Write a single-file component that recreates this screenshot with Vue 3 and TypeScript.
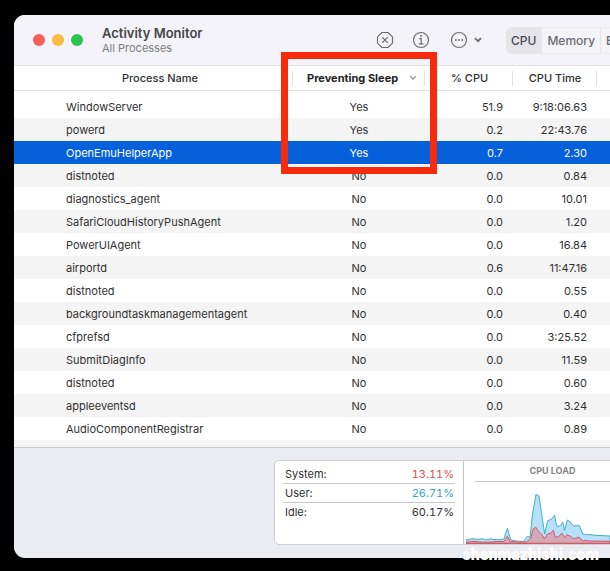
<script setup lang="ts">
import { ref } from 'vue'

interface Process {
  name: string
  sleep: 'Yes' | 'No'
  cpu: string
  time: string
}

const processes: Process[] = [
  { name: 'WindowServer', sleep: 'Yes', cpu: '51.9', time: '9:18:06.63' },
  { name: 'powerd', sleep: 'Yes', cpu: '0.2', time: '22:43.76' },
  { name: 'OpenEmuHelperApp', sleep: 'Yes', cpu: '0.7', time: '2.30' },
  { name: 'distnoted', sleep: 'No', cpu: '0.0', time: '0.84' },
  { name: 'diagnostics_agent', sleep: 'No', cpu: '0.0', time: '10.01' },
  { name: 'SafariCloudHistoryPushAgent', sleep: 'No', cpu: '0.0', time: '1.20' },
  { name: 'PowerUIAgent', sleep: 'No', cpu: '0.0', time: '16.84' },
  { name: 'airportd', sleep: 'No', cpu: '0.6', time: '11:47.16' },
  { name: 'distnoted', sleep: 'No', cpu: '0.0', time: '0.55' },
  { name: 'backgroundtaskmanagementagent', sleep: 'No', cpu: '0.0', time: '0.40' },
  { name: 'cfprefsd', sleep: 'No', cpu: '0.0', time: '3:25.52' },
  { name: 'SubmitDiagInfo', sleep: 'No', cpu: '0.0', time: '11.59' },
  { name: 'distnoted', sleep: 'No', cpu: '0.0', time: '0.60' },
  { name: 'appleeventsd', sleep: 'No', cpu: '0.0', time: '3.24' },
  { name: 'AudioComponentRegistrar', sleep: 'No', cpu: '0.0', time: '0.89' },
]

const tabs = ['CPU', 'Memory', 'Energy']
const activeTab = ref('CPU')
const selected = ref(2)

const stats = [
  { label: 'System:', value: '13.11%', tone: 'system' },
  { label: 'User:', value: '26.71%', tone: 'user' },
  { label: 'Idle:', value: '60.17%', tone: 'idle' },
]
</script>

<template>
  <div class="desktop">
    <main class="window">
      <header class="toolbar">
        <div class="lights">
          <button class="light close" aria-label="Close"></button>
          <button class="light minimise" aria-label="Minimise"></button>
          <button class="light zoom" aria-label="Zoom"></button>
        </div>
        <div class="titles">
          <h1>Activity Monitor</h1>
          <p>All Processes</p>
        </div>
        <div class="actions">
          <button class="icon-button" aria-label="Stop process">
            <svg width="18" height="18" viewBox="0 0 18 18">
              <path d="M5.9 1.5h6.2l4.4 4.4v6.2l-4.4 4.4H5.9l-4.4-4.4V5.9z" />
              <path d="M6.2 6.2l5.6 5.6M11.8 6.2l-5.6 5.6" />
            </svg>
          </button>
          <button class="icon-button" aria-label="Process information">
            <svg width="18" height="18" viewBox="0 0 18 18">
              <circle cx="9" cy="9" r="7.5" />
              <path d="M7.2 7.6h2v5M6.8 12.8h4.6" />
              <circle class="dot" cx="9" cy="5" r="1" />
            </svg>
          </button>
          <button class="icon-button more" aria-label="More options">
            <svg width="18" height="18" viewBox="0 0 18 18">
              <circle cx="9" cy="9" r="7.5" />
              <circle class="dot" cx="5.8" cy="9" r="1" />
              <circle class="dot" cx="9" cy="9" r="1" />
              <circle class="dot" cx="12.2" cy="9" r="1" />
            </svg>
            <svg class="bold" width="8" height="6" viewBox="0 0 8 6">
              <path d="M1 1.2l3 3 3-3" />
            </svg>
          </button>
        </div>
        <nav class="tabs" aria-label="Resource">
          <button
            v-for="tab in tabs"
            :key="tab"
            class="tab"
            :class="{ active: tab === activeTab }"
            @click="activeTab = tab"
          >{{ tab }}</button>
        </nav>
      </header>

      <div class="table-area">
        <table>
          <colgroup>
            <col class="col-name" />
            <col class="col-sleep" />
            <col class="col-cpu" />
            <col class="col-time" />
            <col class="col-rest" />
          </colgroup>
          <thead>
            <tr>
              <th scope="col" class="name-head">Process Name</th>
              <th scope="col" class="sleep-head" aria-sort="descending">
                <button class="sort">
                  <span>Preventing Sleep</span>
                  <svg width="8" height="6" viewBox="0 0 8 6">
                    <path d="M1 1.2l3 3 3-3" />
                  </svg>
                </button>
              </th>
              <th scope="col" class="cpu-head">% CPU</th>
              <th scope="col">CPU Time</th>
              <td></td>
            </tr>
          </thead>
          <tbody>
            <tr
              v-for="(process, index) in processes"
              :key="index"
              :class="{ selected: index === selected }"
              @click="selected = index"
            >
              <td class="name">{{ process.name }}</td>
              <td class="sleep">{{ process.sleep }}</td>
              <td class="number">{{ process.cpu }}</td>
              <td class="number">{{ process.time }}</td>
              <td></td>
            </tr>
          </tbody>
        </table>
        <div class="highlight" aria-hidden="true"></div>
      </div>

      <footer class="summary">
        <div class="panel">
          <dl class="stats">
            <div v-for="stat in stats" :key="stat.label" class="stat">
              <dt>{{ stat.label }}</dt>
              <dd :class="stat.tone">{{ stat.value }}</dd>
            </div>
          </dl>
          <section class="load">
            <h2>CPU LOAD</h2>
            <svg class="chart" width="144" height="54" viewBox="0 0 432 162" role="img" aria-label="CPU load history">
              <path
                class="user-area"
                d="M0 148L4 150L18 146L36 148L48 146L60 150L72 147L90 149L108 149L114 146L124 115L134 148L144 152L158 154L174 154L184 139L192 142L200 70L210 13L219 18L228 80L236 132L245 92L256 88L262 81L266 76L270 100L274 110L284 107L290 96L296 121L304 90L312 95L322 108L340 107L350 132L358 134L372 134L390 136L432 138V162H0Z"
              />
              <path
                class="system-area"
                d="M0 157L18 154L60 157L90 155L114 154L124 139L132 154L160 156L182 156L194 145L201 118L209 111L216 122L227 133L235 147L244 132L254 130L262 120L268 142L278 139L288 130L296 143L303 134L314 139L322 146L340 142L350 153L358 151L368 153L432 154V162H0Z"
              />
              <path class="base" d="M0 160H432" />
            </svg>
          </section>
        </div>
      </footer>
    </main>
    <div class="watermark">shenmazhishi.com</div>
  </div>
</template>

<style>
body {
  margin: 0;
  background: #000;
}
</style>

<style scoped>
.desktop {
  position: relative;
  box-sizing: border-box;
  min-height: 100vh;
  padding: 15px 0 12px 14px;
  overflow: hidden;
  background: #000;
  color: #303030;
  font-family: Inter, "Liberation Sans", sans-serif;
  font-size: 11px;
}

button {
  padding: 0;
  border: 0;
  background: none;
  color: inherit;
  font: inherit;
}

.window {
  overflow: hidden;
  border-radius: 11px 0 0 11px;
  background: #ebecf1;
}

.toolbar {
  display: flex;
  align-items: center;
  box-sizing: border-box;
  height: 51px;
  padding-left: 19px;
  border-bottom: 1px solid #e2e2e5;
  background: #f3f3f9;
}

.lights {
  display: flex;
  gap: 7px;
  flex: none;
  width: 69px;
}

.light {
  width: 12px;
  height: 12px;
  border-radius: 50%;
}

.close { background: #f65f58; }
.minimise { background: #f9bc40; }
.zoom { background: #2bc44a; }

.titles {
  flex: none;
  width: 274px;
  white-space: nowrap;
}

h1,
h2,
p,
dl,
dd {
  margin: 0;
}

h1 {
  color: #46464a;
  font-size: 13px;
  font-weight: 600;
  line-height: 15px;
}

.titles p {
  color: #7c7c82;
  line-height: 14px;
}

.actions {
  display: flex;
  flex: none;
  gap: 18px;
  width: 130px;
  color: #6b6b70;
}

.icon-button {
  display: flex;
  align-items: center;
  gap: 6px;
}

.icon-button + .more {
  margin-left: 2px;
}

svg {
  display: block;
  flex: none;
  fill: none;
  stroke: currentColor;
  stroke-width: 1.2;
}

.bold {
  stroke-width: 1.8;
}

.dot {
  fill: currentColor;
  stroke: none;
}

.tabs {
  display: flex;
  flex: none;
  height: 27px;
  border-radius: 6px;
  background: #f4f4f8;
  box-shadow: inset 0 0 0 1px #ebebf0;
}

.tab {
  padding: 0 5px;
  border-right: 1px solid #e6e6eb;
  color: #6b6b70;
  font-size: 12px;
  font-weight: 500;
}

.tab.active {
  border-radius: 6px 0 0 6px;
  background: #e4e4e9;
  color: #4b4b50;
}

.table-area {
  position: relative;
  padding-bottom: 7px;
  border-bottom: 1px solid #c9c9cc;
  background: #f4f4f5;
}

table {
  width: 100%;
  table-layout: fixed;
  border-spacing: 0;
  background: #fff;
}

.col-name { width: 279px; }
.col-sleep { width: 132px; }
.col-cpu { width: 88px; }
.col-time { width: 84px; }

th,
td {
  overflow: hidden;
  padding: 0;
  white-space: nowrap;
}

thead tr {
  height: 25px;
}

thead th,
thead td {
  border-bottom: 1px solid #e2e2e2;
  font-weight: 500;
}

thead th {
  background: linear-gradient(#e2e2e2, #e2e2e2) right center / 1px 15px no-repeat;
}

.name-head {
  padding-left: 13px;
}

.cpu-head {
  padding-left: 26px;
  text-align: left;
}

.sort {
  display: flex;
  align-items: center;
  justify-content: space-between;
  width: 100%;
  padding: 0 8px 0 14px;
  color: #222;
  font-weight: 700;
}

.sort svg {
  color: #8b8b8b;
}

tbody::before {
  display: block;
  height: 4px;
  content: "";
}

tbody tr {
  height: 23px;
}

tbody tr:nth-child(even) {
  background: #f4f4f5;
}

tbody tr.selected {
  background: #0560dc;
  color: #fff;
}

.name {
  padding-left: 52px;
}

.sleep {
  text-align: center;
}

.number {
  padding-right: 10px;
  text-align: right;
}

.highlight {
  position: absolute;
  top: -14px;
  left: 267px;
  box-sizing: border-box;
  width: 156px;
  height: 122px;
  border: 7px solid #f72a0c;
  pointer-events: none;
}

.summary {
  padding: 12px 0 13px 260px;
}

.panel {
  display: flex;
  box-sizing: border-box;
  width: 368px;
  height: 85px;
  border: 1px solid #cfcfd3;
  border-radius: 5px;
  background: #fff;
}

.stats {
  box-sizing: border-box;
  flex: none;
  width: 189px;
  padding: 4px 8px;
  border-right: 1px solid #c6c6c9;
}

.stat {
  display: flex;
  justify-content: space-between;
  padding: 0 1px 0 2px;
  border-bottom: 1px solid #c9c9c9;
  line-height: 18px;
}

.stat:last-child {
  border-bottom: 0;
}

.stat dd {
  font-variant-numeric: tabular-nums;
}

.system { color: #d9504f; }
.user { color: #31a7c9; }

.load {
  display: flex;
  flex: 1;
  flex-direction: column;
  justify-content: space-between;
}

h2 {
  margin: 0 11px;
  border-bottom: 1px solid #c9c9c9;
  color: #858585;
  font-size: 9px;
  font-weight: 700;
  line-height: 20px;
  text-align: center;
}

.chart {
  margin-left: 2px;
  stroke-width: 3;
}

.user-area {
  fill: #b5e2f8;
  stroke: #43acc8;
}

.system-area {
  fill: #d3a9b8;
  stroke: #d45861;
}

.base {
  stroke: #d45861;
  stroke-width: 4;
}

.watermark {
  position: absolute;
  right: 11px;
  bottom: 6px;
  color: #fff;
  font-family: Roboto, sans-serif;
  font-size: 16px;
  font-weight: 900;
  line-height: 20px;
}
</style>
